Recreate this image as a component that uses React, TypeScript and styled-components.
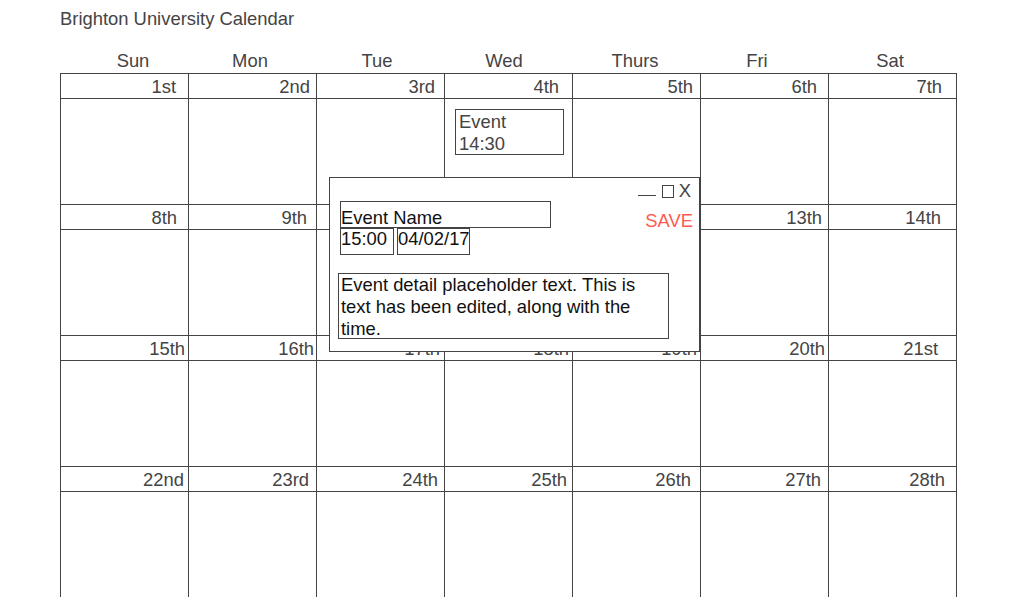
import React from "react";
import styled, { createGlobalStyle } from "styled-components";

const Global = createGlobalStyle`
  html, body { margin: 0; padding: 0; background: #fff; }
  body { font-family: "Liberation Sans", Arial, sans-serif; color: #444; font-size: 18.4px; }
`;

const Page = styled.div`
  padding: 8px 0 0 60px;
  width: 897px;
`;

const Title = styled.h1`
  margin: 0;
  font-size: 18.4px;
  font-weight: normal;
  line-height: 22px;
  color: #444;
`;

const DayHeader = styled.div`
  display: grid;
  grid-template-columns: repeat(7, 128px);
  margin-top: 18px;
  height: 25px;
`;

const DayName = styled.div<{ $shift: number }>`
  text-align: center;
  font-size: 18.4px;
  line-height: 25px;
  padding-left: ${(p) => Math.max(0, p.$shift * 2)}px;
  padding-right: ${(p) => Math.max(0, -p.$shift * 2)}px;
`;

const CalendarWrap = styled.div`
  position: relative;
`;

const Grid = styled.div`
  display: grid;
  grid-template-columns: repeat(7, 128px);
  border-left: 1px solid #444;
  border-top: 1px solid #444;
  width: 896px;
`;

const Cell = styled.div`
  border-right: 1px solid #444;
  border-bottom: 1px solid #444;
  display: flex;
  flex-direction: column;
`;

const DateLabel = styled.div<{ $right: number }>`
  height: 25px;
  border-bottom: 1px solid #444;
  text-align: right;
  padding: 2px ${(p) => p.$right}px 0 0;
  box-sizing: border-box;
  font-size: 18.4px;
  line-height: 22px;
`;

const CellBody = styled.div`
  height: 105px;
  padding: 10px 0 0 10px;
  box-sizing: border-box;
`;

const EventBox = styled.div`
  width: 109px;
  height: 46px;
  box-sizing: border-box;
  border: 1px solid #444;
  padding: 1px 0 0 3px;
  font-size: 18.4px;
  line-height: 22px;
  color: #444;
`;

const Popup = styled.div`
  position: absolute;
  left: 269px;
  top: 104px;
  width: 371px;
  height: 175px;
  box-sizing: border-box;
  border: 1px solid #444;
  background: #fff;
  padding: 3px 6px 0 8px;
  display: flex;
  flex-direction: column;
  color: #111;
`;

const Controls = styled.div`
  display: flex;
  justify-content: flex-end;
  align-items: center;
  height: 20px;
  padding-right: 2px;
  gap: 5px;
  color: #444;
  font-size: 18.4px;
  line-height: 20px;
`;

const MinLine = styled.span`
  width: 18px;
  height: 9px;
  border-bottom: 1px solid #444;
  margin-right: 1px;
`;

const MaxBox = styled.span`
  width: 10px;
  height: 11px;
  border: 1px solid #444;
  margin-top: 1px;
`;

const TopRow = styled.div`
  display: flex;
  justify-content: space-between;
`;

const Fields = styled.div`
  display: flex;
  flex-direction: column;
  padding-left: 2px;
`;

const Field = styled.div<{ $w: number; $pad: number }>`
  width: ${(p) => p.$w}px;
  height: 27px;
  box-sizing: border-box;
  border: 1px solid #444;
  font-size: 18.4px;
  line-height: 20px;
  padding-top: ${(p) => p.$pad}px;
  white-space: nowrap;
  overflow: hidden;
`;

const InlineFields = styled.div`
  display: flex;
  gap: 3px;
`;

const Save = styled.div`
  color: #ff5a4f;
  font-size: 18.4px;
  line-height: 20px;
  padding-top: 10px;
`;

const Detail = styled.div`
  margin-top: 18px;
  width: 331px;
  height: 66px;
  box-sizing: border-box;
  border: 1px solid #444;
  padding: 0 2px;
  font-size: 18.4px;
  line-height: 22px;
`;

const BottomEdge = styled.div`
  position: fixed;
  left: 0;
  right: 0;
  bottom: 0;
  height: 1px;
  background: #d0d0d0;
  z-index: -1;
`;

const days = ["Sun", "Mon", "Tue", "Wed", "Thurs", "Fri", "Sat"];
const shifts = [9, -2, -3, -4, -1, -7, -2];

// right inset of each date label, as drawn in the mockup
const labelInsets = [
  12, 6, 9, 13, 7, 11, 14,
  11, 9, 8, 8, 8, 6, 15,
  3, 2, 4, 3, 3, 3, 18,
  4, 7, 6, 5, 9, 7, 11,
];

const ordinal = (n: number) => {
  const s = n % 10 === 1 && n !== 11 ? "st" : n % 10 === 2 && n !== 12 ? "nd" : n % 10 === 3 && n !== 13 ? "rd" : "th";
  return `${n}${s}`;
};

export default function App() {
  const dates = Array.from({ length: 28 }, (_, i) => i + 1);
  return (
    <>
      <Global />
      <Page>
        <Title>Brighton University Calendar</Title>
        <DayHeader>
          {days.map((d, i) => (
            <DayName key={d} $shift={shifts[i]}>
              {d}
            </DayName>
          ))}
        </DayHeader>
        <CalendarWrap>
          <Grid>
            {dates.map((n) => (
              <Cell key={n}>
                <DateLabel $right={labelInsets[n - 1]}>{ordinal(n)}</DateLabel>
                <CellBody>
                  {n === 4 && (
                    <EventBox>
                      Event
                      <br />
                      14:30
                    </EventBox>
                  )}
                </CellBody>
              </Cell>
            ))}
          </Grid>
          <Popup>
            <Controls>
              <MinLine />
              <MaxBox />
              <span>X</span>
            </Controls>
            <TopRow>
              <Fields>
                <Field $w={211} $pad={6}>Event Name</Field>
                <InlineFields>
                  <Field $w={54} $pad={0}>15:00</Field>
                  <Field $w={73} $pad={0}>04/02/17</Field>
                </InlineFields>
              </Fields>
              <Save>SAVE</Save>
            </TopRow>
            <Detail>
              Event detail placeholder text. This is text has been edited, along with the time.
            </Detail>
          </Popup>
        </CalendarWrap>
      </Page>
      <BottomEdge />
    </>
  );
}
